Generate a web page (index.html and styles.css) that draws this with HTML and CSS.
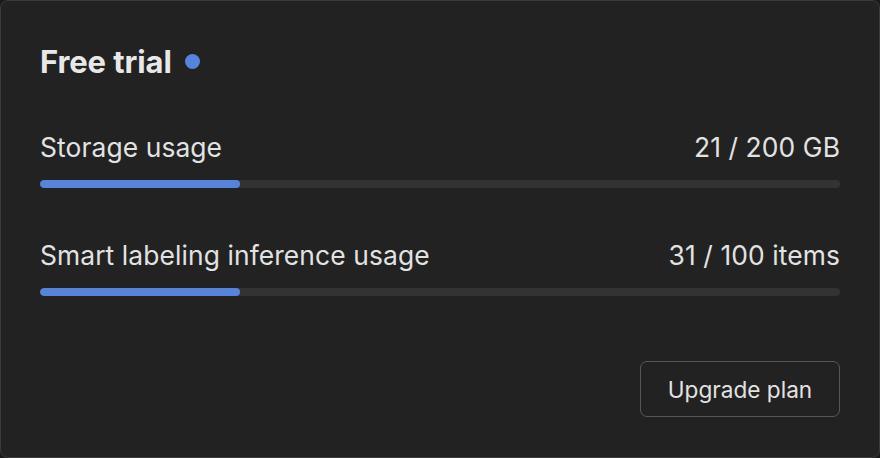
FILE: index.html
```html
<!DOCTYPE html>
<html>
<head>
<meta charset="utf-8">
<link rel="stylesheet" href="styles.css">
</head>
<body>
<div class="card">
  <div class="title-row">
    <h1 class="title">Free trial</h1>
    <span class="dot"></span>
  </div>
  <div class="usage usage-first">
    <div class="usage-head">
      <span>Storage usage</span>
      <span>21 / 200 GB</span>
    </div>
    <div class="track"><div class="fill" style="width: 25%"></div></div>
  </div>
  <div class="usage">
    <div class="usage-head">
      <span>Smart labeling inference usage</span>
      <span>31 / 100 items</span>
    </div>
    <div class="track"><div class="fill" style="width: 25%"></div></div>
  </div>
  <div class="actions">
    <button class="btn">Upgrade plan</button>
  </div>
</div>
</body>
</html>
```
FILE: styles.css
```css
html, body {
  margin: 0;
  padding: 0;
  background: #1b1b1b;
}
body {
  font-family: Inter, "Noto Sans", sans-serif;
  color: #e6e6e6;
}
.card {
  box-sizing: border-box;
  width: 880px;
  height: 458px;
  background: #222222;
  border: 1px solid #3a3a3a;
  border-radius: 8px;
  padding: 39px 39px 40px 39px;
  display: flex;
  flex-direction: column;
}
.title-row {
  display: flex;
  align-items: center;
  gap: 13px;
  height: 42px;
}
.title {
  margin: 0;
  font-size: 31px;
  font-weight: 700;
  color: #e8e8e8;
  letter-spacing: -0.1px;
}
.dot {
  width: 15px;
  height: 15px;
  border-radius: 50%;
  background: #5683dc;
}
.usage-first {
  margin-top: 49px;
}
.usage {
  margin-bottom: 51px;
}
.usage:last-of-type {
  margin-bottom: 0;
}
.usage-head {
  display: flex;
  justify-content: space-between;
  font-size: 26.4px;
  line-height: 32px;
  letter-spacing: 0.1px;
  color: #e2e2e2;
}
.track {
  margin-top: 17px;
  height: 8px;
  border-radius: 4px;
  background: #333333;
  overflow: hidden;
}
.fill {
  height: 100%;
  background: #5683dc;
  border-radius: 4px;
}
.actions {
  margin-top: auto;
  display: flex;
  justify-content: flex-end;
}
.btn {
  box-sizing: border-box;
  width: 200px;
  height: 56px;
  background: transparent;
  border: 1.5px solid #565656;
  border-radius: 7px;
  font-family: Inter, "Noto Sans", sans-serif;
  font-size: 22.6px;
  color: #e2e2e2;
}
```
